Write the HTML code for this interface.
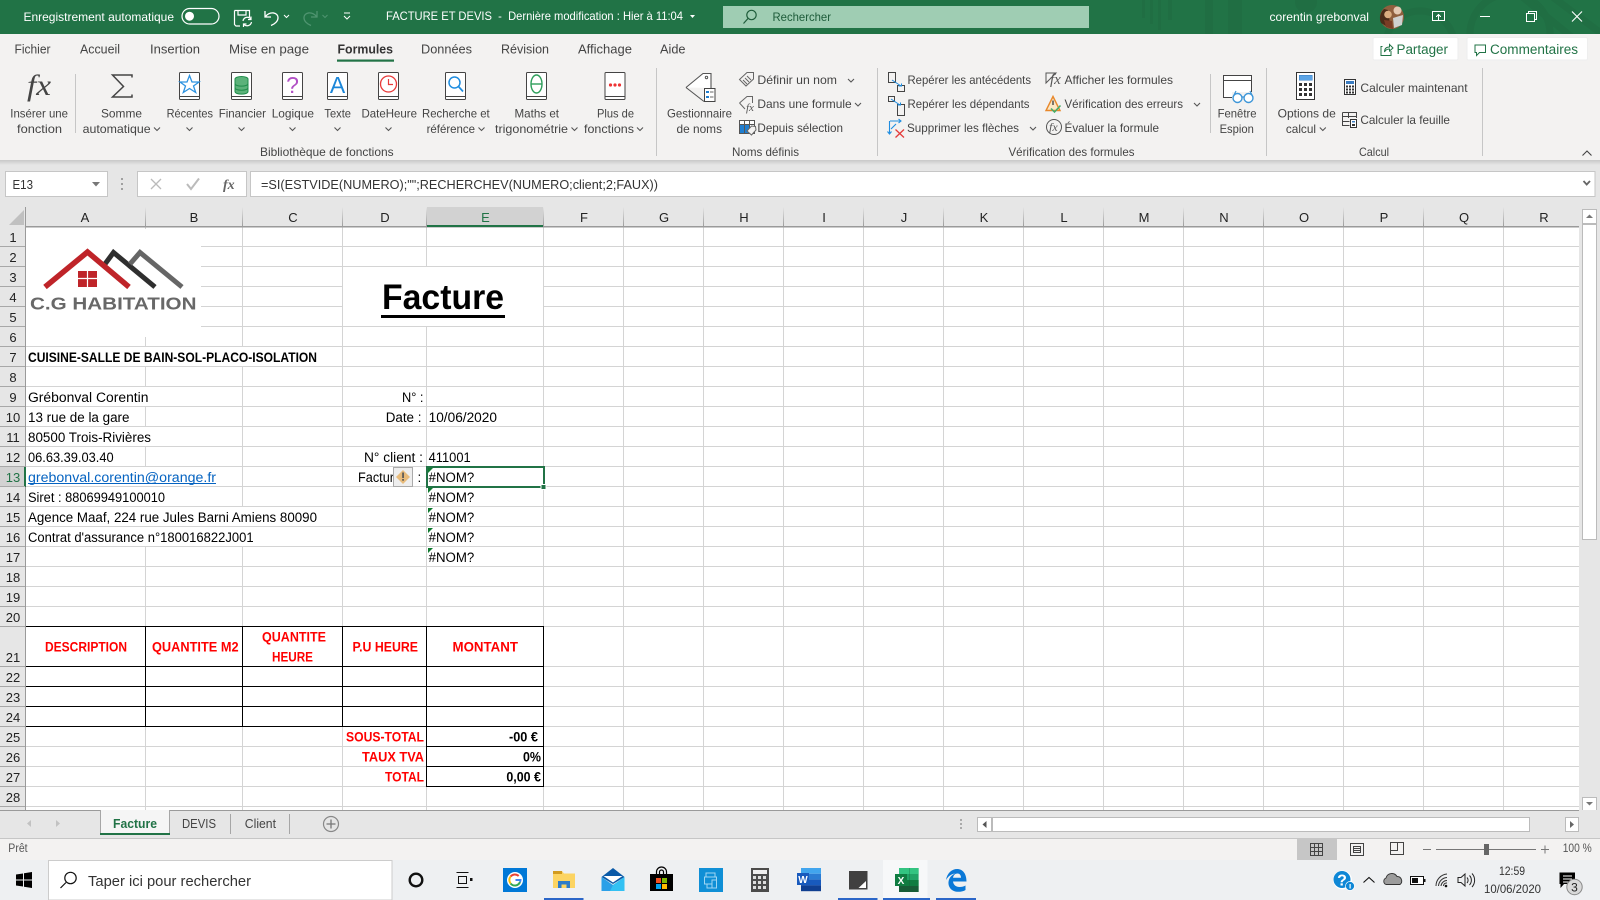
<!DOCTYPE html>
<html lang="fr"><head><meta charset="utf-8"><title>FACTURE ET DEVIS</title>
<style>
html,body{margin:0;padding:0;width:1600px;height:900px;overflow:hidden;background:#e6e6e6}
svg{display:block;font-family:"Liberation Sans",sans-serif}
.t{font-size:12px;fill:#fff}
.tab{font-size:13px;fill:#444}
.r{font-size:12px;fill:#444}
.c{font-size:13.5px;fill:#000}
.b{font-size:13.5px;font-weight:bold;fill:#000}
.red{font-size:13.5px;font-weight:bold;fill:#f00}
.h{font-size:13px;fill:#222;text-anchor:middle}
.n{font-size:13px;fill:#222;text-anchor:middle}
.ch{fill:none;stroke:#555;stroke-width:1.1}
.crisp{shape-rendering:crispEdges}
</style></head><body>
<svg width="1600" height="900" viewBox="0 0 1600 900" xmlns="http://www.w3.org/2000/svg">
<defs>
<path id="ch" class="ch" d="M-3 -1.5L0 1.5L3 -1.5"/>
<g id="book"><rect x=".5" y=".5" width="20" height="27" rx="1" fill="#fff" stroke="#444"/><path d="M.5 24.5H20.5" stroke="#444" fill="none"/></g>
<linearGradient id="fade" x1="0" y1="0" x2="0" y2="1"><stop offset="0" stop-color="#e6e6e6"/><stop offset="1" stop-color="#9a9a9a"/></linearGradient>
<linearGradient id="shadow" x1="0" y1="0" x2="0" y2="1"><stop offset="0" stop-color="#c8c8c8"/><stop offset="1" stop-color="#e6e6e6"/></linearGradient>
</defs>

<!-- base -->
<rect width="1600" height="900" fill="#e6e6e6"/>

<!-- title bar -->
<rect width="1600" height="34" fill="#217346"/>
<g fill="#206e43" stroke="none">
<rect x="1142" y="0" width="3" height="18"/><rect x="1150" y="0" width="3" height="24"/><rect x="1158" y="0" width="3" height="30"/><rect x="1168" y="0" width="4" height="20"/>
<rect x="1205" y="0" width="8" height="34"/><rect x="1228" y="0" width="14" height="34"/>
<circle cx="1306" cy="2" r="11"/>
</g>
<g fill="none" stroke="#206e43" stroke-width="7">
<circle cx="1420" cy="45" r="34"/><circle cx="1510" cy="34" r="40"/>
<path d="M1520 -5L1600 60M1550 -5L1610 40"/>
</g>
<text class="t" x="23.5" y="21" textLength="150.5" lengthAdjust="spacingAndGlyphs">Enregistrement automatique</text>
<rect x="182" y="8.5" width="37" height="15.5" rx="7.7" fill="none" stroke="#fff" stroke-width="1.2"/>
<circle cx="189.5" cy="16.2" r="4.5" fill="#fff"/>
<!-- save -->
<g fill="none" stroke="#fff" stroke-width="1.2"><path d="M234.5 10.5H249.5V17M240 26H236L234.5 24.5V10.5M238 10.5V15H246V10.5"/><path d="M243 21a4.5 4.5 0 0 1 8-2M251.5 22a4.5 4.5 0 0 1-8 2M251 16.5V19.500H248M243.500 27V24H246.500"/></g>
<!-- undo / redo -->
<path d="M265 11V17H271M265.500 16.500C270 11 278 12 278 18C278 21 275 24 271 25.500" fill="none" stroke="#fff" stroke-width="1.3"/>
<path d="M284 15L286.500 17.500L289 15" fill="none" stroke="#fff"/>
<path d="M317 11V17H311M316.500 16.500C312 11 304 12 304 18C304 21 307 24 311 25.500" fill="none" stroke="#4f9470" stroke-width="1.3"/>
<path d="M322.500 15L325 17.500L327.500 15" fill="none" stroke="#4f9470"/>
<path d="M344 13H350M344 16L347 19L350 16" fill="none" stroke="#fff"/>
<text class="t" x="386" y="20" textLength="297" lengthAdjust="spacingAndGlyphs" xml:space="preserve">FACTURE ET DEVIS  -  Dernière modification : Hier à 11:04</text>
<path d="M690 15H695L692.500 18Z" fill="#fff"/>
<rect x="723" y="6" width="366" height="22" fill="#9fcdb3"/>
<g fill="none" stroke="#1e5c3a" stroke-width="1.2"><circle cx="751.500" cy="15" r="4.700"/><path d="M748 18.500L743.500 23.500"/></g>
<text x="772.500" y="21" font-size="12" fill="#1e5c3a" textLength="58.500" lengthAdjust="spacingAndGlyphs">Rechercher</text>
<text class="t" x="1269.500" y="21" textLength="99.500" lengthAdjust="spacingAndGlyphs">corentin grebonval</text>
<!-- avatar -->
<circle cx="1392" cy="17" r="12" fill="#8f5f3e"/>
<path d="M1384 9a12 12 0 0 0-3 14l5 3l4-2l-2-14z" fill="#4a2c18"/>
<circle cx="1388" cy="14.500" r="3.800" fill="#d9ad80"/><circle cx="1397.500" cy="10.500" r="4" fill="#e3c9b3"/>
<path d="M1393 18L1403 15L1402 25L1394 28Z" fill="#cfd1d0"/><path d="M1384 20l8 1l1 8l-7-2z" fill="#7a3d25"/>
<!-- window buttons -->
<g fill="none" stroke="#fff" stroke-width="1.100" class="crisp">
<rect x="1432.500" y="11.500" width="12" height="9"/><path d="M1438.500 20.500V15M1436 17L1438.500 14.500L1441 17"/>
<path d="M1480 16.500H1490"/>
<rect x="1526.500" y="13.500" width="8" height="8"/><path d="M1528.500 13.500V11.500H1536.500V19.500H1534.500"/>
</g>
<path d="M1572 11.500L1582 21.500M1582 11.500L1572 21.500" fill="none" stroke="#fff" stroke-width="1.100"/>

<!-- ribbon -->
<rect x="0" y="34" width="1600" height="126" fill="#f3f2f1"/>
<rect x="0" y="160" width="1600" height="5" fill="url(#shadow)"/>
<text class="tab" x="14.500" y="53.700" textLength="36" lengthAdjust="spacingAndGlyphs">Fichier</text>
<text class="tab" x="80" y="53.700" textLength="40" lengthAdjust="spacingAndGlyphs">Accueil</text>
<text class="tab" x="150" y="53.700" textLength="50" lengthAdjust="spacingAndGlyphs">Insertion</text>
<text class="tab" x="229" y="53.700" textLength="80" lengthAdjust="spacingAndGlyphs">Mise en page</text>
<text class="tab" x="337.500" y="53.700" textLength="55.500" lengthAdjust="spacingAndGlyphs" style="font-weight:bold;fill:#333;font-size:12.500px">Formules</text>
<rect x="337" y="59.500" width="57" height="2.200" fill="#217346"/>
<text class="tab" x="421" y="53.700" textLength="51" lengthAdjust="spacingAndGlyphs">Données</text>
<text class="tab" x="501" y="53.700" textLength="48" lengthAdjust="spacingAndGlyphs">Révision</text>
<text class="tab" x="578" y="53.700" textLength="54" lengthAdjust="spacingAndGlyphs">Affichage</text>
<text class="tab" x="660" y="53.700" textLength="25.500" lengthAdjust="spacingAndGlyphs">Aide</text>

<rect x="1373" y="37.500" width="85" height="22.500" rx="1.500" fill="#fff" stroke="#eee"/>
<rect x="1467" y="37.500" width="120.500" height="22.500" rx="1.500" fill="#fff" stroke="#eee"/>
<g fill="none" stroke="#217346" stroke-width="1"><path d="M1382.500 46.500H1381V55.500H1391V51"/><path d="M1384.500 52C1384.500 48 1387 47 1389.500 47V44.500L1393 48L1389.500 51V49C1387.500 49 1385.500 50 1384.500 52Z"/>
<path d="M1475 45H1485.500V52.500H1479.500L1476.500 55.500V52.500H1475Z"/></g>
<text x="1396.500" y="54" font-size="13.500" fill="#217346" textLength="51.500" lengthAdjust="spacingAndGlyphs">Partager</text>
<text x="1490" y="54" font-size="13.500" fill="#217346" textLength="88" lengthAdjust="spacingAndGlyphs">Commentaires</text>

<!-- separators -->
<g stroke="#c6c6c6" class="crisp"><path d="M75.500 74V133M656.500 68V156M877.500 68V156M1210.500 74V133M1266.500 68V156M1482.500 68V156"/></g>

<!-- fx, sigma -->
<text x="27" y="95" font-family="Liberation Serif,serif" font-style="italic" font-size="30" fill="#444" textLength="24" lengthAdjust="spacingAndGlyphs">fx</text>
<path d="M132 77.500V75H112.500L123.500 86.500L112.500 97H132V94.500" fill="none" stroke="#444" stroke-width="1.500"/>

<!-- books -->
<use href="#book" x="179" y="72"/><use href="#book" x="231" y="72"/><use href="#book" x="282" y="72"/><use href="#book" x="327" y="72"/><use href="#book" x="378" y="72"/><use href="#book" x="445" y="72"/><use href="#book" x="526" y="72"/><use href="#book" x="604.500" y="72"/>
<path d="M189.500 75.500L192 82H199L193.500 86L195.700 92.500L189.500 88.500L183.300 92.500L185.500 86L180 82H187Z" fill="#fff" stroke="#2e93e0" stroke-width="1.300"/>
<g fill="#5cb27a" stroke="#1f8c4a"><ellipse cx="241.500" cy="79" rx="6.500" ry="2.500"/><path d="M235 79V91.500C235 95 248 95 248 91.500V79" /><path d="M235 83.500C235 87 248 87 248 83.500M235 87.800C235 91 248 91 248 87.800" fill="none"/></g>
<text x="292.500" y="93" font-size="23" fill="#b150c5" text-anchor="middle">?</text>
<text x="337.500" y="93" font-size="23" fill="#1b86d8" text-anchor="middle">A</text>
<circle cx="388.500" cy="84" r="8" fill="#fff" stroke="#e83a3a" stroke-width="1.300"/><path d="M388.500 79V84.500H393" fill="none" stroke="#e83a3a" stroke-width="1.200"/>
<circle cx="454.500" cy="82.500" r="5.500" fill="#fff" stroke="#1f8de0" stroke-width="1.500"/><path d="M458.500 86.500L463 91.500" stroke="#1f8de0" stroke-width="1.700"/>
<ellipse cx="536.500" cy="84" rx="5.500" ry="9" fill="#fff" stroke="#2e9e5b" stroke-width="1.400"/><path d="M531 84H542" stroke="#2e9e5b" stroke-width="1.400"/>
<g fill="#e33"><circle cx="610.500" cy="85" r="1.600"/><circle cx="615" cy="85" r="1.600"/><circle cx="619.500" cy="85" r="1.600"/></g>

<!-- ribbon big labels -->
<text class="r" x="10.300" y="117.500" textLength="57.700" lengthAdjust="spacingAndGlyphs">Insérer une</text>
<text class="r" x="17" y="133" textLength="45" lengthAdjust="spacingAndGlyphs">fonction</text>
<text class="r" x="101" y="117.500" textLength="41" lengthAdjust="spacingAndGlyphs">Somme</text>
<text class="r" x="82.600" y="133" textLength="68" lengthAdjust="spacingAndGlyphs">automatique</text>
<use href="#ch" x="157" y="129"/>
<text class="r" x="166.600" y="117.500" textLength="46.400" lengthAdjust="spacingAndGlyphs">Récentes</text><use href="#ch" x="189.500" y="129"/>
<text class="r" x="218.700" y="117.500" textLength="47.300" lengthAdjust="spacingAndGlyphs">Financier</text><use href="#ch" x="241.500" y="129"/>
<text class="r" x="271.700" y="117.500" textLength="42.300" lengthAdjust="spacingAndGlyphs">Logique</text><use href="#ch" x="292.500" y="129"/>
<text class="r" x="324.400" y="117.500" textLength="26.600" lengthAdjust="spacingAndGlyphs">Texte</text><use href="#ch" x="337.500" y="129"/>
<text class="r" x="361.500" y="117.500" textLength="55.500" lengthAdjust="spacingAndGlyphs">DateHeure</text><use href="#ch" x="388.500" y="129"/>
<text class="r" x="422" y="117.500" textLength="67.700" lengthAdjust="spacingAndGlyphs">Recherche et</text>
<text class="r" x="426.600" y="133" textLength="48.400" lengthAdjust="spacingAndGlyphs">référence</text><use href="#ch" x="481.500" y="129"/>
<text class="r" x="514.500" y="117.500" textLength="44.500" lengthAdjust="spacingAndGlyphs">Maths et</text>
<text class="r" x="495" y="133" textLength="73" lengthAdjust="spacingAndGlyphs">trigonométrie</text><use href="#ch" x="574.500" y="129"/>
<text class="r" x="597" y="117.500" textLength="37" lengthAdjust="spacingAndGlyphs">Plus de</text>
<text class="r" x="584" y="133" textLength="50" lengthAdjust="spacingAndGlyphs">fonctions</text><use href="#ch" x="640" y="129"/>
<text class="r" x="260" y="156" textLength="133.600" lengthAdjust="spacingAndGlyphs">Bibliothèque de fonctions</text>

<!-- names -->
<path d="M686 87.500L703 73.500H711V88M686 87.500L704 101.500" fill="#fff" stroke="#555" stroke-width="1.100"/>
<circle cx="706.500" cy="77.500" r="1.200" fill="none" stroke="#555"/>
<rect x="704.500" y="88.500" width="10.500" height="13" fill="#fff" stroke="#444"/>
<g fill="#1f7ed0" class="crisp"><rect x="706" y="91" width="3" height="2"/><rect x="706" y="96" width="3" height="2"/></g>
<path d="M710 92H713.500M710 97H713.500" stroke="#666" class="crisp"/>
<text class="r" x="667" y="117.500" textLength="65" lengthAdjust="spacingAndGlyphs">Gestionnaire</text>
<text class="r" x="676.500" y="133" textLength="45.500" lengthAdjust="spacingAndGlyphs">de noms</text>
<g fill="none" stroke="#666" stroke-width="1"><path d="M739.500 79.500L747 72.500H753.500V79L746 86Z"/><path d="M743 80L747 84M745 78L749 82M747 76L751 80"/>
<path d="M739.500 103L747 96.500H752.500V103M739.500 103L745 109"/></g>
<text x="746" y="111" font-family="Liberation Serif,serif" font-style="italic" font-size="11" fill="#555">fx</text>
<g class="crisp"><rect x="739.500" y="120.500" width="15" height="13" fill="#fff" stroke="#555"/><rect x="740" y="125" width="9" height="8" fill="#1f7ed0"/><path d="M739.500 124.500H754.500M744.500 120.500V133.500M749.500 120.500V128" stroke="#555" fill="none"/></g>
<path d="M747 131L751.500 126L755.500 126.500L756 130L751.500 135Z" fill="#f3f2f1" stroke="#666"/>
<text class="r" x="757.400" y="84" textLength="79.600" lengthAdjust="spacingAndGlyphs">Définir un nom</text><use href="#ch" x="851" y="80.500"/>
<text class="r" x="757.400" y="108" textLength="94.300" lengthAdjust="spacingAndGlyphs">Dans une formule</text><use href="#ch" x="858" y="104.500"/>
<text class="r" x="757.400" y="132" textLength="85.600" lengthAdjust="spacingAndGlyphs">Depuis sélection</text>
<text class="r" x="732" y="156" textLength="67" lengthAdjust="spacingAndGlyphs">Noms définis</text>

<!-- audit icons -->
<g fill="none" stroke="#444" class="crisp"><path d="M888.500 72.500H895.500V82.500H888.500Z"/><path d="M897.500 85.500H904.500V91.500H897.500Z"/>
<path d="M888.500 96.500H894.500V101.500H888.500Z"/><path d="M897.500 104.500H904.500V115.500H897.500Z"/></g>
<path d="M892 80L901 86M898.500 86H901.500V83.500M891 99L900 105M897.500 105H900.500V102.500" fill="none" stroke="#1f8de0"/>
<path d="M889.500 121V134M887.500 131.500L889.500 134L891.500 131.500M890 121H901M898.500 119L901 121L898.500 123M891 129L896 124" fill="none" stroke="#1f8de0" stroke-width="1.100"/>
<path d="M895.500 129.500L904 137.500M904 129.500L895.500 137.500" stroke="#e43b3b" stroke-width="1.300"/>
<text class="r" x="907.500" y="84" textLength="123.500" lengthAdjust="spacingAndGlyphs">Repérer les antécédents</text>
<text class="r" x="907.500" y="108" textLength="122" lengthAdjust="spacingAndGlyphs">Repérer les dépendants</text>
<text class="r" x="907" y="132" textLength="112" lengthAdjust="spacingAndGlyphs">Supprimer les flèches</text><use href="#ch" x="1033" y="128.500"/>
<path d="M1046 73H1056L1046 83V73ZM1046 83" fill="none" stroke="#555"/>
<text x="1050" y="84" font-family="Liberation Serif,serif" font-style="italic" font-size="15" fill="#555">fx</text>
<path d="M1053 96.500L1046 110.500H1060Z" fill="#fbe7c4" stroke="#e8872a" stroke-width="1.400"/><path d="M1053 100.500V105" stroke="#444" stroke-width="1.400"/>
<path d="M1051 108.500L1054.500 112L1060.500 105.500" fill="none" stroke="#45ad6a" stroke-width="1.500"/>
<circle cx="1054" cy="127" r="7.500" fill="none" stroke="#555"/>
<text x="1049" y="131" font-family="Liberation Serif,serif" font-style="italic" font-size="12" fill="#555">fx</text>
<text class="r" x="1064.500" y="84" textLength="108.500" lengthAdjust="spacingAndGlyphs">Afficher les formules</text>
<text class="r" x="1064.500" y="108" textLength="118.500" lengthAdjust="spacingAndGlyphs">Vérification des erreurs</text><use href="#ch" x="1197" y="104.500"/>
<text class="r" x="1064.500" y="132" textLength="94.500" lengthAdjust="spacingAndGlyphs">Évaluer la formule</text>
<text class="r" x="1008.500" y="156" textLength="126" lengthAdjust="spacingAndGlyphs">Vérification des formules</text>
<!-- espion -->
<g class="crisp" fill="none" stroke="#444"><rect x="1223.500" y="75.500" width="28" height="22" fill="#fff"/><path d="M1223.500 80.500H1251.500"/></g>
<rect x="1232" y="92" width="24" height="12" fill="#f3f2f1"/>
<g fill="#fff" stroke="#3d96d8" stroke-width="1.400"><circle cx="1237.500" cy="98" r="4.500"/><circle cx="1248.500" cy="98" r="4.500"/></g><path d="M1242 97H1244M1233 97L1236 91M1253 97L1250 91" stroke="#3d96d8" fill="none" stroke-width="1.200"/>
<text class="r" x="1217.600" y="117.500" textLength="38.900" lengthAdjust="spacingAndGlyphs">Fenêtre</text>
<text class="r" x="1219.600" y="133" textLength="34.200" lengthAdjust="spacingAndGlyphs">Espion</text>
<!-- calc -->
<g class="crisp"><rect x="1296.500" y="72.500" width="18" height="27" fill="#fff" stroke="#333"/><rect x="1299" y="75" width="13" height="5" fill="#5ba4e6" stroke="#3a7cc0" stroke-width=".5"/>
<g fill="#333"><rect x="1299" y="83" width="3" height="3"/><rect x="1304" y="83" width="3" height="3"/><rect x="1309" y="83" width="3" height="3"/><rect x="1299" y="88" width="3" height="3"/><rect x="1304" y="88" width="3" height="3"/><rect x="1309" y="88" width="3" height="3"/><rect x="1299" y="93" width="3" height="3"/><rect x="1304" y="93" width="3" height="3"/><rect x="1309" y="93" width="3" height="3"/></g>
<rect x="1344.500" y="79.500" width="11" height="15" fill="#fff" stroke="#333"/><rect x="1346" y="81" width="8" height="3" fill="#3a7cc0"/>
<g fill="#333"><rect x="1346" y="85.500" width="2" height="2"/><rect x="1349" y="85.500" width="2" height="2"/><rect x="1352" y="85.500" width="2" height="2"/><rect x="1346" y="88.500" width="2" height="2"/><rect x="1349" y="88.500" width="2" height="2"/><rect x="1352" y="88.500" width="2" height="2"/><rect x="1346" y="91.500" width="2" height="2"/><rect x="1349" y="91.500" width="2" height="2"/><rect x="1352" y="91.500" width="2" height="2"/></g>
<path d="M1342.500 112.500H1356.500V118M1342.500 112.500V125.500H1349.500M1342.500 116.500H1356.500M1342.500 121.500H1349.500M1348.500 112.500V118" fill="none" stroke="#444"/>
<rect x="1350.500" y="119.500" width="6" height="8" fill="#fff" stroke="#333"/><rect x="1352" y="121" width="3" height="1.500" fill="#3a7cc0"/><rect x="1352" y="124" width="3" height="2" fill="#333"/></g>
<text class="r" x="1277.600" y="117.500" textLength="58.200" lengthAdjust="spacingAndGlyphs">Options de</text>
<text class="r" x="1285.900" y="133" textLength="30.100" lengthAdjust="spacingAndGlyphs">calcul</text><use href="#ch" x="1322.800" y="129"/>
<text class="r" x="1360.400" y="92" textLength="107.200" lengthAdjust="spacingAndGlyphs">Calculer maintenant</text>
<text class="r" x="1360.400" y="124" textLength="89.600" lengthAdjust="spacingAndGlyphs">Calculer la feuille</text>
<text class="r" x="1359" y="156" textLength="30" lengthAdjust="spacingAndGlyphs">Calcul</text>
<path d="M1582.500 155.500L1587 151L1591.500 155.500" fill="none" stroke="#444" stroke-width="1.100"/>

<!-- formula bar -->
<g class="crisp"><rect x="5.500" y="171.500" width="102" height="25" fill="#fff" stroke="#c6c6c6"/>
<rect x="137.500" y="171.500" width="109" height="25" fill="#fff" stroke="#c6c6c6"/>
<rect x="250.500" y="171.500" width="1344.500" height="25" fill="#fff" stroke="#c6c6c6"/></g>
<text x="12.500" y="189" font-size="13" fill="#333" textLength="20.500" lengthAdjust="spacingAndGlyphs">E13</text>
<path d="M92 182H100L96 186.500Z" fill="#777"/>
<g fill="#a0a0a0" class="crisp"><rect x="121" y="178" width="2" height="2"/><rect x="121" y="183" width="2" height="2"/><rect x="121" y="188" width="2" height="2"/></g>
<path d="M151 179L161 189M161 179L151 189" stroke="#bbb" stroke-width="1.300"/>
<path d="M187 184L191 189L199 178.500" fill="none" stroke="#bbb" stroke-width="2"/>
<text x="223" y="189" font-family="Liberation Serif,serif" font-style="italic" font-weight="bold" font-size="14" fill="#666">fx</text>
<text x="261" y="189" font-size="13" fill="#333" textLength="397" lengthAdjust="spacingAndGlyphs">=SI(ESTVIDE(NUMERO);"";RECHERCHEV(NUMERO;client;2;FAUX))</text>
<path d="M1583.500 181L1586.700 184.500L1590 181" fill="none" stroke="#666" stroke-width="1.800"/>

<!-- sheet -->
<rect x="26" y="227" width="1553" height="583" fill="#fff"/>
<!-- selected headers -->
<rect x="427" y="207" width="117" height="20" fill="#d2d2d2" class="crisp"/>
<rect x="0" y="467" width="26" height="20" fill="#d2d2d2" class="crisp"/>
<path d="M9 225L24 210V225Z" fill="#c0c0c0"/>
<!-- grid -->
<path class="crisp" stroke="#d4d4d4" stroke-width="1" fill="none" d="M26 246.500H1579M26 266.500H1579M26 286.500H1579M26 306.500H1579M26 326.500H1579M26 346.500H1579M26 366.500H1579M26 386.500H1579M26 406.500H1579M26 426.500H1579M26 446.500H1579M26 466.500H1579M26 486.500H1579M26 506.500H1579M26 526.500H1579M26 546.500H1579M26 566.500H1579M26 586.500H1579M26 606.500H1579M26 626.500H1579M26 666.500H1579M26 686.500H1579M26 706.500H1579M26 726.500H1579M26 746.500H1579M26 766.500H1579M26 786.500H1579M26 806.500H1579M145.500 227V810M242.500 227V810M342.500 227V810M426.500 227V810M543.500 227V810M623.500 227V810M703.500 227V810M783.500 227V810M863.500 227V810M943.500 227V810M1023.500 227V810M1103.500 227V810M1183.500 227V810M1263.500 227V810M1343.500 227V810M1423.500 227V810M1503.500 227V810"/>
<!-- gridline patches -->
<g fill="#fff" class="crisp">
<rect x="26" y="229" width="175" height="108"/>
<rect x="343" y="267" width="200" height="59"/>
<rect x="145" y="347" width="1" height="19"/><rect x="242" y="347" width="1" height="19"/>
<rect x="145" y="387" width="1" height="19"/><rect x="145" y="427" width="1" height="19"/>
<rect x="145" y="467" width="1" height="19"/><rect x="145" y="487" width="1" height="19"/>
<rect x="145" y="507" width="1" height="19"/><rect x="242" y="507" width="1" height="19"/>
<rect x="145" y="527" width="1" height="19"/><rect x="242" y="527" width="1" height="19"/>
</g>
<!-- header borders -->
<rect x="26" y="226" width="1553" height="1.500" fill="#9a9a9a" class="crisp"/>
<rect x="25" y="207" width="1" height="603" fill="#9a9a9a" class="crisp"/>
<rect x="427" y="225" width="117" height="2" fill="#217346" class="crisp"/>
<rect x="24" y="467" width="2" height="20" fill="#217346" class="crisp"/>
<!-- column header separators -->
<g fill="url(#fade)" class="crisp"><rect x="145" y="207" width="1" height="20"/><rect x="242" y="207" width="1" height="20"/><rect x="342" y="207" width="1" height="20"/><rect x="426" y="207" width="1" height="20"/><rect x="543" y="207" width="1" height="20"/><rect x="623" y="207" width="1" height="20"/><rect x="703" y="207" width="1" height="20"/><rect x="783" y="207" width="1" height="20"/><rect x="863" y="207" width="1" height="20"/><rect x="943" y="207" width="1" height="20"/><rect x="1023" y="207" width="1" height="20"/><rect x="1103" y="207" width="1" height="20"/><rect x="1183" y="207" width="1" height="20"/><rect x="1263" y="207" width="1" height="20"/><rect x="1343" y="207" width="1" height="20"/><rect x="1423" y="207" width="1" height="20"/><rect x="1503" y="207" width="1" height="20"/></g>
<path class="crisp" stroke="#a8a8a8" d="M0 246.500H25M0 266.500H25M0 286.500H25M0 306.500H25M0 326.500H25M0 346.500H25M0 366.500H25M0 386.500H25M0 406.500H25M0 426.500H25M0 446.500H25M0 466.500H25M0 486.500H25M0 506.500H25M0 526.500H25M0 546.500H25M0 566.500H25M0 586.500H25M0 606.500H25M0 626.500H25M0 666.500H25M0 686.500H25M0 706.500H25M0 726.500H25M0 746.500H25M0 766.500H25M0 786.500H25M0 806.500H25"/>
<!-- column letters -->
<text class="h" x="85" y="222">A</text><text class="h" x="194" y="222">B</text><text class="h" x="293" y="222">C</text><text class="h" x="385" y="222">D</text><text class="h" x="485.500" y="222" style="fill:#217346">E</text><text class="h" x="584" y="222">F</text><text class="h" x="664" y="222">G</text><text class="h" x="744" y="222">H</text><text class="h" x="824" y="222">I</text><text class="h" x="904" y="222">J</text><text class="h" x="984" y="222">K</text><text class="h" x="1064" y="222">L</text><text class="h" x="1144" y="222">M</text><text class="h" x="1224" y="222">N</text><text class="h" x="1304" y="222">O</text><text class="h" x="1384" y="222">P</text><text class="h" x="1464" y="222">Q</text><text class="h" x="1544" y="222">R</text>
<!-- row numbers -->
<text class="n" x="13" y="242">1</text><text class="n" x="13" y="262">2</text><text class="n" x="13" y="282">3</text><text class="n" x="13" y="302">4</text><text class="n" x="13" y="322">5</text><text class="n" x="13" y="342">6</text><text class="n" x="13" y="362">7</text><text class="n" x="13" y="382">8</text><text class="n" x="13" y="402">9</text><text class="n" x="13" y="422">10</text><text class="n" x="13" y="442">11</text><text class="n" x="13" y="462">12</text><text class="n" x="13" y="482" style="fill:#217346">13</text><text class="n" x="13" y="502">14</text><text class="n" x="13" y="522">15</text><text class="n" x="13" y="542">16</text><text class="n" x="13" y="562">17</text><text class="n" x="13" y="582">18</text><text class="n" x="13" y="602">19</text><text class="n" x="13" y="622">20</text><text class="n" x="13" y="662">21</text><text class="n" x="13" y="682">22</text><text class="n" x="13" y="702">23</text><text class="n" x="13" y="722">24</text><text class="n" x="13" y="742">25</text><text class="n" x="13" y="762">26</text><text class="n" x="13" y="782">27</text><text class="n" x="13" y="802">28</text>

<!-- logo -->
<g fill="none" stroke-linejoin="miter">
<path d="M105 264L113.500 252.500L155 287" stroke="#2f2f2f" stroke-width="5"/>
<path d="M130 264L140 252.500L182 287" stroke="#666" stroke-width="5"/>
<path d="M45 287L87.500 252L129 287" stroke="#bf2429" stroke-width="5.500"/>
</g>
<rect x="78" y="271" width="19" height="16" fill="#bf2429"/>
<path d="M87.500 271V287M78 278.500H97" stroke="#fff" stroke-width="1.200"/>
<text x="30" y="309.500" font-size="17.500" font-weight="bold" fill="#686868" textLength="166.500" lengthAdjust="spacingAndGlyphs">C.G HABITATION</text>
<!-- title -->
<text x="382" y="309" font-size="35" font-weight="bold" fill="#000" textLength="122" lengthAdjust="spacingAndGlyphs">Facture</text>
<rect x="381" y="315" width="124" height="3" fill="#000"/>

<!-- cells -->
<text class="b" x="28" y="362" textLength="289" lengthAdjust="spacingAndGlyphs">CUISINE-SALLE DE BAIN-SOL-PLACO-ISOLATION</text>
<text class="c" x="28" y="402" textLength="120.500" lengthAdjust="spacingAndGlyphs">Grébonval Corentin</text>
<text class="c" x="28" y="422" textLength="101.500" lengthAdjust="spacingAndGlyphs">13 rue de la gare</text>
<text class="c" x="28" y="442" textLength="123" lengthAdjust="spacingAndGlyphs">80500 Trois-Rivières</text>
<text class="c" x="28" y="462" textLength="85.600" lengthAdjust="spacingAndGlyphs">06.63.39.03.40</text>
<text x="28" y="482" font-size="13.500" fill="#0563c1" textLength="188" lengthAdjust="spacingAndGlyphs">grebonval.corentin@orange.fr</text>
<rect x="28" y="483" width="188" height="1" fill="#0563c1"/>
<text class="c" x="28" y="502" textLength="137" lengthAdjust="spacingAndGlyphs">Siret : 88069949100010</text>
<text class="c" x="28" y="522" textLength="289" lengthAdjust="spacingAndGlyphs">Agence Maaf, 224 rue Jules Barni Amiens 80090</text>
<text class="c" x="28" y="542" textLength="225.600" lengthAdjust="spacingAndGlyphs">Contrat d'assurance n°180016822J001</text>
<text class="c" x="402" y="402" textLength="21.500" lengthAdjust="spacingAndGlyphs">N° :</text>
<text class="c" x="385.700" y="422" textLength="35.800" lengthAdjust="spacingAndGlyphs">Date :</text>
<text class="c" x="364" y="462" textLength="59" lengthAdjust="spacingAndGlyphs">N° client :</text>
<text class="c" x="358" y="482" textLength="36" lengthAdjust="spacingAndGlyphs">Factur</text>
<text class="c" x="417.500" y="482">:</text>
<text class="c" x="428.600" y="422" textLength="68.400" lengthAdjust="spacingAndGlyphs">10/06/2020</text>
<text class="c" x="428.600" y="462" textLength="42.100" lengthAdjust="spacingAndGlyphs">411001</text>
<text class="c" x="428.600" y="482" textLength="45.700" lengthAdjust="spacingAndGlyphs">#NOM?</text>
<text class="c" x="428.600" y="502" textLength="45.700" lengthAdjust="spacingAndGlyphs">#NOM?</text>
<text class="c" x="428.600" y="522" textLength="45.700" lengthAdjust="spacingAndGlyphs">#NOM?</text>
<text class="c" x="428.600" y="542" textLength="45.700" lengthAdjust="spacingAndGlyphs">#NOM?</text>
<text class="c" x="428.600" y="562" textLength="45.700" lengthAdjust="spacingAndGlyphs">#NOM?</text>
<!-- error triangles -->
<g fill="#0f7a2f"><path d="M428 468H433L428 473Z"/><path d="M428 488H433L428 493Z"/><path d="M428 508H433L428 513Z"/><path d="M428 528H433L428 533Z"/><path d="M428 548H433L428 553Z"/></g>
<!-- warning button -->
<rect x="393.500" y="467.500" width="19" height="19" fill="#eeeeee" stroke="#aaa" class="crisp"/>
<path d="M403 470L410 477L403 484L396 477Z" fill="#e8bb7b"/>
<rect x="402.200" y="472.500" width="1.700" height="5.500" fill="#555"/><rect x="402.200" y="479" width="1.700" height="1.700" fill="#555"/>
<!-- selection -->
<rect x="427" y="467" width="117" height="20" fill="none" stroke="#217346" stroke-width="2" class="crisp"/>
<rect x="541" y="484.500" width="5" height="5" fill="#217346" stroke="#fff" stroke-width=".6" class="crisp"/>

<!-- table -->
<path class="crisp" stroke="#000" fill="none" d="M26 626.500H544M26 666.500H544M26 686.500H544M26 706.500H544M26 726.500H544M145.500 627V727M242.500 627V727M342.500 627V727M426.500 627V787M543.500 627V787M427 746.500H544M427 766.500H544M427 786.500H544"/>
<text class="red" x="45" y="651.700" textLength="82" lengthAdjust="spacingAndGlyphs">DESCRIPTION</text>
<text class="red" x="152" y="651.700" textLength="86.600" lengthAdjust="spacingAndGlyphs">QUANTITE M2</text>
<text class="red" x="262" y="641.700" textLength="64" lengthAdjust="spacingAndGlyphs">QUANTITE</text>
<text class="red" x="272" y="661.700" textLength="41" lengthAdjust="spacingAndGlyphs">HEURE</text>
<text class="red" x="352.500" y="651.700" textLength="65.500" lengthAdjust="spacingAndGlyphs">P.U HEURE</text>
<text class="red" x="452.500" y="651.700" textLength="65.500" lengthAdjust="spacingAndGlyphs">MONTANT</text>
<text class="red" x="346" y="741.700" textLength="78" lengthAdjust="spacingAndGlyphs">SOUS-TOTAL</text>
<text class="red" x="362" y="761.700" textLength="62" lengthAdjust="spacingAndGlyphs">TAUX TVA</text>
<text class="red" x="385" y="781.700" textLength="39" lengthAdjust="spacingAndGlyphs">TOTAL</text>
<text class="b" x="509" y="741.700" textLength="29" lengthAdjust="spacingAndGlyphs">-00 €</text>
<text class="b" x="523" y="761.700" textLength="18" lengthAdjust="spacingAndGlyphs">0%</text>
<text class="b" x="506.400" y="781.700" textLength="34.600" lengthAdjust="spacingAndGlyphs">0,00 €</text>

<!-- vertical scrollbar -->
<g class="crisp"><rect x="1579" y="207" width="21" height="603" fill="#e6e6e6"/>
<rect x="1582.500" y="209.500" width="14" height="14" fill="#fff" stroke="#bbb"/>
<rect x="1582.500" y="224.500" width="14" height="315" fill="#fff" stroke="#bbb"/>
<rect x="1582.500" y="797.500" width="14" height="13" fill="#fff" stroke="#bbb"/></g>
<path d="M1586 218H1593L1589.500 214.500Z" fill="#777"/><path d="M1586 802H1593L1589.500 805.500Z" fill="#777"/>

<!-- sheet tabs -->
<rect x="0" y="810" width="1600" height="28" fill="#e6e6e6"/>
<rect x="0" y="810" width="1579" height="1.200" fill="#9a9a9a" class="crisp"/>
<rect x="100" y="810" width="70" height="25" fill="#f5f5f5" class="crisp"/>
<path d="M100.500 810V835M169.500 810V835" stroke="#a6a6a6" class="crisp"/>
<rect x="100" y="833" width="70" height="2.200" fill="#217346" class="crisp"/>
<text x="113" y="828" font-size="13" font-weight="bold" fill="#217346" textLength="44" lengthAdjust="spacingAndGlyphs">Facture</text>
<text x="182" y="828" font-size="13" fill="#444" textLength="34" lengthAdjust="spacingAndGlyphs">DEVIS</text>
<text x="244.800" y="828" font-size="13" fill="#444" textLength="31.200" lengthAdjust="spacingAndGlyphs">Client</text>
<path d="M230.500 814V834M289.500 814V834" stroke="#a6a6a6" class="crisp"/>
<path d="M31 820V827L27 823.500Z" fill="#c2c2c2"/><path d="M56 820V827L60 823.500Z" fill="#c2c2c2"/>
<circle cx="331" cy="824" r="7.500" fill="none" stroke="#888" stroke-width="1.200"/><path d="M326.500 824H335.500M331 819.500V828.500" stroke="#777" stroke-width="1.300"/>
<g fill="#aaa" class="crisp"><rect x="960" y="819" width="2" height="2"/><rect x="960" y="823" width="2" height="2"/><rect x="960" y="827" width="2" height="2"/></g>
<g class="crisp"><rect x="977.500" y="817.500" width="14" height="14" fill="#fff" stroke="#bbb"/><rect x="992.500" y="817.500" width="537" height="14" fill="#fff" stroke="#bbb"/><rect x="1565.500" y="817.500" width="13" height="14" fill="#fff" stroke="#bbb"/></g>
<path d="M986.500 821V828L982.500 824.500Z" fill="#555"/><path d="M1570 821V828L1574 824.500Z" fill="#666"/>

<!-- status bar -->
<rect x="0" y="838" width="1600" height="22" fill="#f3f2f1"/>
<rect x="0" y="838" width="1600" height="1" fill="#c6c6c6" class="crisp"/>
<text x="8.300" y="852" font-size="11.500" fill="#555" textLength="19.300" lengthAdjust="spacingAndGlyphs">Prêt</text>
<rect x="1297" y="839" width="40" height="21" fill="#c6c6c6" class="crisp"/>
<g class="crisp" fill="none" stroke="#444"><path d="M1310.500 843.500H1322.500V855.500H1310.500ZM1314.500 843.500V855.500M1318.500 843.500V855.500M1310.500 847.500H1322.500M1310.500 851.500H1322.500"/>
<rect x="1350.500" y="843.500" width="13" height="12"/><rect x="1353.500" y="846.500" width="7" height="6"/><path d="M1354 848.500H1360M1354 850.500H1360"/>
<path d="M1390.500 842.500H1403.500V854.500H1390.500ZM1397.500 842.500V850.500H1390.500"/>
<path d="M1423 849.500H1431M1541 849.500H1549M1545 845.500V853.500M1436 849.500H1536" stroke="#777"/></g>
<rect x="1484" y="844" width="5" height="11" fill="#666"/>
<text x="1562.700" y="852" font-size="11.500" fill="#555" textLength="29" lengthAdjust="spacingAndGlyphs">100 %</text>

<!-- taskbar -->
<rect x="0" y="860" width="1600" height="40" fill="#eef0f2"/>
<g fill="#000"><path d="M16 874.500L23 873.500V879.500H16ZM24 873.300L32 872V879.500H24ZM16 880.500H23V886.500L16 885.500ZM24 880.500H32V888L24 886.700Z"/></g>
<rect x="48.500" y="860.500" width="343.500" height="39.500" fill="#fff" stroke="#ccc" class="crisp"/>
<g fill="none" stroke="#111" stroke-width="1.200"><circle cx="70.500" cy="878" r="5.700"/><path d="M66 882.500L60.500 888"/></g>
<text x="88" y="886" font-size="14.500" fill="#333" textLength="163" lengthAdjust="spacingAndGlyphs">Taper ici pour rechercher</text>
<circle cx="416" cy="880" r="6.300" fill="none" stroke="#111" stroke-width="2.400"/>
<g fill="none" stroke="#111" stroke-width="1.100" class="crisp"><path d="M456.500 872.500H468.500M458.500 876.500H466.500V883.500H458.500ZM456.500 887.500H468.500"/></g><rect x="470" y="878" width="2.500" height="3" fill="#111"/>
<!-- G -->
<rect x="503" y="868" width="24" height="24" fill="#0078d7"/><circle cx="515" cy="880" r="8" fill="#fff"/>
<g fill="none" stroke-width="2"><path d="M510.600 876.500A5.500 5.500 0 0 1 518.700 876" stroke="#ea4335"/><path d="M510.600 876.500A5.500 5.500 0 0 0 510.600 883.500" stroke="#fbbc05"/><path d="M510.600 883.500A5.500 5.500 0 0 0 520 882" stroke="#34a853"/><path d="M515.500 880H520.500A5.500 5.500 0 0 1 520 882" stroke="#4285f4"/></g>
<!-- explorer -->
<path d="M553 871H562L564 873.500H575V888H553Z" fill="#fcd462"/><rect x="553" y="871" width="9" height="3" fill="#d29b1f"/>
<path d="M558 888V881H570V888H566.500V884.500H561.500V888Z" fill="#2d7cc9"/>
<!-- mail -->
<path d="M601.500 877L613 868L624.500 877L613 884Z" fill="#0a5aa8"/><path d="M603.500 876H622.500L613 882.500Z" fill="#fff"/><path d="M601.500 877L613 885L624.500 877V891H601.500Z" fill="#2ba0e8"/><path d="M613 885L624.500 877V891H610Z" fill="#33c1f3"/>
<!-- store -->
<rect x="650" y="874" width="23" height="17" fill="#000"/><path d="M656.500 875V872A5 5 0 0 1 666.500 872V875M659.500 875V872A2 2 0 0 1 663.500 872V875" fill="none" stroke="#000" stroke-width="1.200"/>
<rect x="656" y="878" width="5" height="5" fill="#f25022"/><rect x="662" y="878" width="5" height="5" fill="#7fba00"/><rect x="656" y="884" width="5" height="5" fill="#00a4ef"/><rect x="662" y="884" width="5" height="5" fill="#ffb900"/>
<!-- printer tile -->
<rect x="699" y="868" width="24" height="24" fill="#0f8fd6"/><g fill="none" stroke="#9fd6f3" stroke-width="1"><rect x="706" y="873" width="9" height="4"/><rect x="704.500" y="877" width="12" height="7"/><rect x="712" y="880" width="4.500" height="8" fill="#0f8fd6"/><rect x="707" y="884" width="5" height="4"/></g>
<!-- calculator -->
<rect x="751" y="868" width="18" height="24" fill="#4c4c4c"/><rect x="753" y="870" width="14" height="4" fill="#eee"/>
<g fill="#ddd"><rect x="753" y="876" width="3" height="3"/><rect x="758" y="876" width="3" height="3"/><rect x="763" y="876" width="3" height="3"/><rect x="753" y="881" width="3" height="3"/><rect x="758" y="881" width="3" height="3"/><rect x="763" y="881" width="3" height="3"/><rect x="753" y="886" width="3" height="3"/><rect x="758" y="886" width="3" height="3"/><rect x="763" y="886" width="3" height="3"/></g>
<!-- word -->
<rect x="801" y="868" width="20" height="5.800" fill="#41a5ee"/><rect x="801" y="873.800" width="20" height="5.800" fill="#2b7cd3"/><rect x="801" y="879.600" width="20" height="5.800" fill="#185abd"/><rect x="801" y="885.400" width="20" height="5.800" fill="#103f91"/>
<rect x="797" y="873" width="12" height="12" fill="#185abd"/><text x="803" y="883" font-size="10" font-weight="bold" fill="#fff" text-anchor="middle">W</text>
<!-- sticky -->
<rect x="849" y="871" width="18.500" height="18.500" fill="#404040"/><path d="M866 881V888H858.500Z" fill="#fff"/>
<!-- excel active -->
<rect x="883" y="860" width="44.500" height="40" fill="#f7f8f9"/>
<rect x="899" y="868" width="19.600" height="24" fill="#21a366"/><rect x="899" y="868" width="19.600" height="6" fill="#33c481"/><rect x="899" y="880" width="19.600" height="6" fill="#107c41"/><rect x="899" y="886" width="19.600" height="6" fill="#185c37"/><rect x="909" y="868" width="1" height="24" fill="#185c37" opacity=".3"/>
<rect x="895" y="874" width="12" height="12" fill="#107c41"/><text x="901" y="884" font-size="10" font-weight="bold" fill="#fff" text-anchor="middle">X</text>
<!-- edge -->
<path fill-rule="evenodd" fill="#0a78d7" d="M946 880C947 873 952 869 957 869C963 869 966.500 874 966.500 881.500H953C953.500 885 956 887 959.500 887C962 887 964 886.500 965.500 885.500V890C963.500 891.300 961 891.800 958 891.800C952 891.800 948 887.500 948.500 882C949 878 951 875.500 955 873.500C951 874 948 876.500 946 880ZM953 877.800H961C961 875 959.500 873.500 957.500 873.500C955 873.500 953.500 875 953 877.800Z"/>
<!-- underlines -->
<g fill="#2b66c8" class="crisp"><rect x="544" y="898" width="39.500" height="2"/><rect x="838" y="898" width="39.500" height="2"/><rect x="883" y="898" width="47" height="2"/><rect x="936" y="898" width="40" height="2"/></g>
<!-- tray -->
<circle cx="1342.500" cy="880" r="9.500" fill="#fff"/><circle cx="1342" cy="879.500" r="8.500" fill="#0e87d6"/>
<text x="1342" y="885.500" font-size="16" font-weight="bold" fill="#fff" text-anchor="middle">?</text>
<circle cx="1350" cy="886" r="4.500" fill="#0e87d6" stroke="#fff" stroke-width=".7"/><rect x="1349.500" y="884" width="1.200" height="4.500" fill="#fff"/>
<path d="M1363.500 882.500L1369 877.500L1374.500 882.500" fill="none" stroke="#111" stroke-width="1.100"/>
<path d="M1386 884.500A3.500 3.500 0 0 1 1386 878A6 6 0 0 1 1397 876.500A4.500 4.500 0 0 1 1400 884.500Z" fill="#9c9c9c" stroke="#333" stroke-width=".9"/>
<rect x="1410.500" y="876.500" width="13" height="8" fill="#fff" stroke="#111" class="crisp"/><rect x="1412" y="878" width="6" height="5" fill="#111" class="crisp"/><rect x="1424" y="879" width="1.500" height="3" fill="#111" class="crisp"/>
<g fill="none" stroke="#333"><path d="M1436 886A12 12 0 0 1 1447 874M1438.500 886A9 9 0 0 1 1447 877.500M1441 886A6 6 0 0 1 1447 880.500M1443.500 886A3 3 0 0 1 1447 883"/></g><circle cx="1446" cy="886" r="1.300" fill="#111"/>
<path d="M1458 877.500H1461L1465 874V886L1461 882.500H1458ZM1467 877.500A4 4 0 0 1 1467 883M1469.500 875.500A7 7 0 0 1 1469.500 885M1472 873.500A10 10 0 0 1 1472 887" fill="none" stroke="#222"/>
<text x="1499" y="875" font-size="12" fill="#333" textLength="26" lengthAdjust="spacingAndGlyphs">12:59</text>
<text x="1484" y="893" font-size="12" fill="#333" textLength="57" lengthAdjust="spacingAndGlyphs">10/06/2020</text>
<path d="M1559.500 872.500H1575V884H1564L1560.500 888V884H1559.500Z" fill="#000"/><path d="M1563 876H1572M1563 879H1572M1563 882H1569" stroke="#fff"/>
<circle cx="1574.500" cy="887" r="7.700" fill="#d9d9d9" stroke="#888"/><text x="1574.500" y="891.500" font-size="12" fill="#222" text-anchor="middle">3</text>
</svg>
</body></html>
